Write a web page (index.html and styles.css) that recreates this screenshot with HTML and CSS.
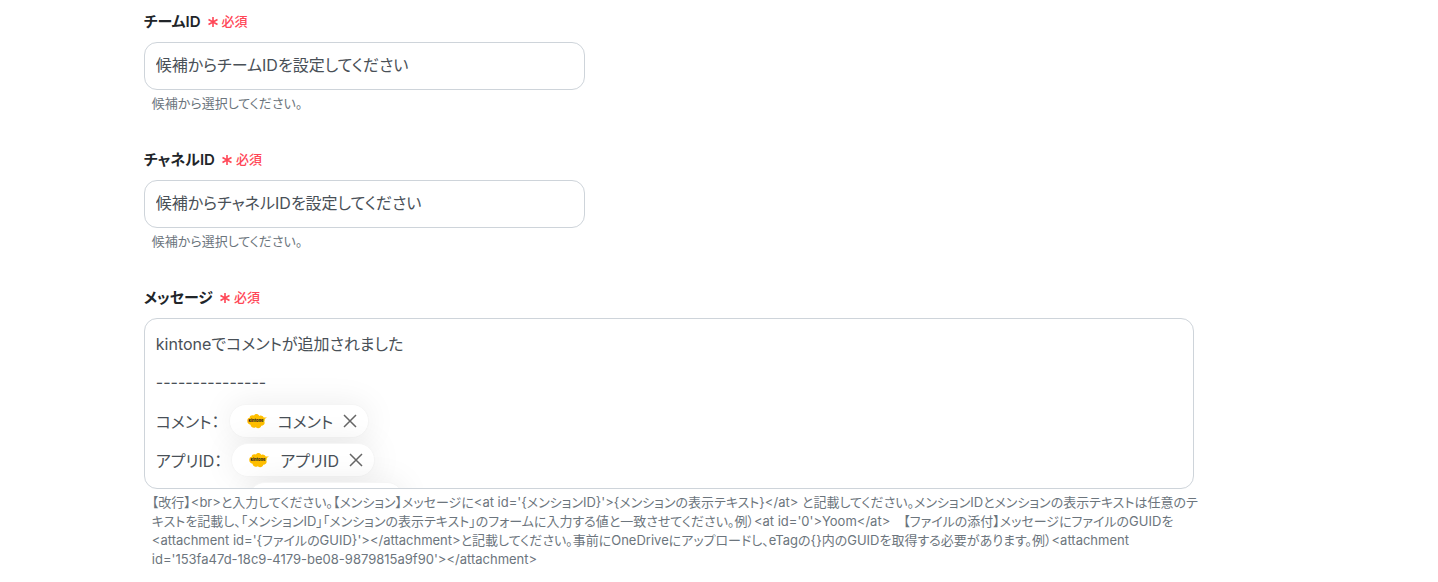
FILE: index.html
```html
<!DOCTYPE html>
<html lang="ja">
<head>
  <meta charset="UTF-8" />
  <title>メッセージ設定</title>
  <meta name="viewport" content="width=device-width, initial-scale=1.0" />
  <link rel="stylesheet" href="styles.css">
</head>
<body>
  <svg class="sprite" aria-hidden="true">
    <symbol id="kintone" viewBox="0 0 20 16">
      <path fill="#ffbf00" d="M.3 7.500C0 10 1.500 11.500 3.500 11.800C4 14.500 6.500 15.500 8.800 14.300C11 16 13.800 15 14.300 12.800C17 12.800 18.300 10.500 17.300 8.300C17.900 7.500 18 6.500 17.600 6L20 4.600L16.600 4.600C15.800 2.800 14 2.200 12.300 2.900C11 .6 8 .4 7 2.600C4.800 1.600 2.300 2.700 2.800 4.800C1.200 5 .4 6 .3 7.500Z" />
      <text x="9" y="9" text-anchor="middle" class="logo-text">kintone</text>
    </symbol>
    <symbol id="close" viewBox="0 0 14 14">
      <path d="M1 1L13 13M13 1L1 13" fill="none" stroke="#666" stroke-width="1.500" />
    </symbol>
    <symbol id="asterisk" viewBox="0 0 10 10">
      <path d="M5 0V10M.5 2.500L9.500 7.500M9.500 2.500L.5 7.500" fill="none" stroke="#ff4757" stroke-width="1.600" />
    </symbol>
  </svg>

  <form class="form">
    <div class="field">
      <label class="label" for="teamId">チームID
        <span class="required"><svg class="asterisk"><use href="#asterisk" /></svg>必須</span>
      </label>
      <input class="input" type="text" id="teamId" value="候補からチームIDを設定してください" />
      <p class="help">候補から選択してください。</p>
    </div>

    <div class="field">
      <label class="label" for="channelId">チャネルID
        <span class="required"><svg class="asterisk"><use href="#asterisk" /></svg>必須</span>
      </label>
      <input class="input" type="text" id="channelId" value="候補からチャネルIDを設定してください" />
      <p class="help">候補から選択してください。</p>
    </div>

    <div class="field">
      <div class="label" id="messageLabel">メッセージ
        <span class="required"><svg class="asterisk"><use href="#asterisk" /></svg>必須</span>
      </div>
      <div class="editor" role="textbox" aria-multiline="true" aria-labelledby="messageLabel" contenteditable="true" spellcheck="false">
        <div class="line">kintoneでコメントが追加されました</div>
        <div class="line">---------------</div>
        <div class="line">コメント：
          <span class="chip" contenteditable="false"><svg class="logo"><use href="#kintone" /></svg>コメント<button class="remove" type="button" aria-label="コメントを削除"><svg class="close"><use href="#close" /></svg></button></span>
        </div>
        <div class="line">アプリID：
          <span class="chip" contenteditable="false"><svg class="logo"><use href="#kintone" /></svg>アプリID<button class="remove" type="button" aria-label="アプリIDを削除"><svg class="close"><use href="#close" /></svg></button></span>
        </div>
        <div class="line">
          <span class="chip chip-empty" contenteditable="false"></span>
        </div>
      </div>
      <p class="help help-wide">【改行】&lt;br&gt;と入力してください。【メンション】メッセージに&lt;at id='{メンションID}'&gt;{メンションの表示テキスト}&lt;/at&gt; と記載してください。メンションIDとメンションの表示テキストは任意のテキストを記載し、「メンションID」「メンションの表示テキスト」のフォームに入力する値と一致させてください。例）&lt;at id='0'&gt;Yoom&lt;/at&gt;　【ファイルの添付】メッセージにファイルのGUIDを&lt;attachment id='{ファイルのGUID}'&gt;&lt;/attachment&gt;と記載してください。事前にOneDriveにアップロードし、eTagの{}内のGUIDを取得する必要があります。例）&lt;attachment id='153fa47d-18c9-4179-be08-9879815a9f90'&gt;&lt;/attachment&gt;</p>
    </div>
  </form>
</body>
</html>
```
FILE: styles.css
```css
* {
  box-sizing: border-box;
}

body {
  margin: 0;
  background: #fff;
  color: #495057;
  font-family: Inter, "Noto Sans CJK JP", sans-serif;
  font-size: 16px;
  font-feature-settings: "palt";
}

.sprite {
  display: none;
}

.form {
  width: 73%;
  margin-left: 10%;
  padding-top: 8px;
  display: flex;
  flex-direction: column;
  gap: 33px;
}

.label {
  display: flex;
  align-items: center;
  gap: 7px;
  height: 24px;
  margin-bottom: 10px;
  color: #212529;
  font-size: 15px;
  font-weight: 600;
}

.required {
  display: flex;
  align-items: center;
  gap: 4px;
  color: #ff4757;
  font-size: 13px;
  font-weight: 500;
}

.asterisk {
  width: 10px;
  height: 10px;
  margin-top: 3px;
}

.input {
  display: block;
  width: 42%;
  height: 48px;
  padding: 0 11px 5px;
  border: 1px solid #ced4da;
  border-radius: 13px;
  background: #fff;
  color: #495057;
  font: inherit;
  font-feature-settings: inherit;
}

.help {
  margin: 4px 0 0;
  padding-left: 8px;
  color: #6c757d;
  font-size: 13px;
  line-height: 19px;
}

.help-wide {
  margin-right: -8px;
}

.editor {
  height: 171px;
  padding: 4px 11px;
  border: 1px solid #ced4da;
  border-radius: 13px;
  overflow: hidden;
}

.line {
  display: flex;
  align-items: center;
  gap: 9px;
  height: 39px;
}

.chip {
  display: flex;
  align-items: center;
  height: 34px;
  padding: 0 11px 0 17px;
  border: 1px solid #f5f5f5;
  border-radius: 17px;
  background: #fff;
  box-shadow: 0 0 32px rgba(0, 0, 0, 0.08);
}

.chip-empty {
  width: 156px;
  margin-left: 92px;
}

.logo {
  width: 20px;
  height: 16px;
  margin-right: 11px;
}

.logo-text {
  fill: #222;
  font-size: 4px;
  font-weight: 800;
}

.remove {
  display: flex;
  margin-left: 10px;
  padding: 0;
  border: none;
  background: none;
  cursor: pointer;
}

.close {
  width: 14px;
  height: 14px;
}
```
